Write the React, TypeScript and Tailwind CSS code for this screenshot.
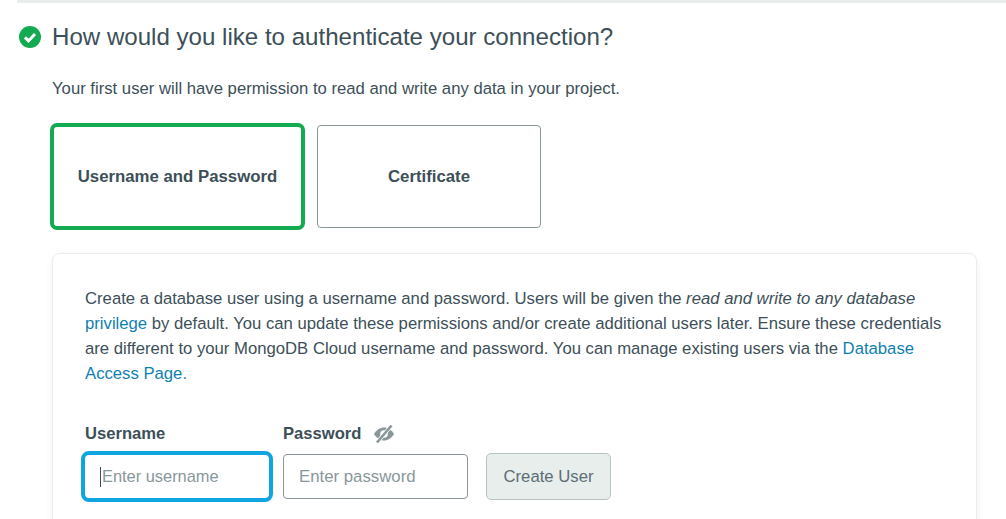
export default function App() {
  return (
    <div className="w-[1006px] h-[519px] overflow-hidden bg-white text-[#3d4f58] font-['Liberation_Sans',sans-serif]">
      <div className="ml-[17px] h-[3px] bg-[#e7eeec]" />
      <div className="flex items-center ml-[19px] mt-[21px] h-[26px]">
        <svg width="22" height="22" viewBox="0 0 22 22" className="shrink-0">
          <circle cx="11" cy="11" r="11" fill="#13aa52" />
          <path d="M6 11.400l3.500 3.500 6.500-7" fill="none" stroke="#fff" strokeWidth="3" />
        </svg>
        <h2 className="ml-[11px] text-[24.1px] leading-[26px] font-normal whitespace-nowrap">How would you like to authenticate your connection?</h2>
      </div>
      <div className="ml-[52px]">
        <p className="mt-[27px] text-[16.7px] leading-[24px] whitespace-nowrap">Your first user will have permission to read and write any data in your project.</p>
        <div className="flex items-center gap-[12px] mt-[22px]">
          <div className="w-[255px] h-[107px] box-border border-4 border-[#13aa52] rounded-[7px] ml-[-2px] pt-[1px] flex items-center justify-center text-[16.8px] font-bold">Username and Password</div>
          <div className="w-[224px] h-[103px] box-border border border-[#89979b] rounded-[4px] pt-[1px] flex items-center justify-center text-[16.8px] font-bold">Certificate</div>
        </div>
        <div className="mt-[23px] w-[925px] h-[400px] box-border border border-[#e7eeec] rounded-[8px] shadow-[0_3px_8px_rgba(6,22,33,0.06)] pl-[32px] pr-[30px] pt-[32px]">
          <p className="text-[16.7px] leading-[25px]">
            Create a database user using a username and password. Users will be given the <em>read and write to any database</em>{" "}
            <span className="text-[#0f7fb0]">privilege</span> by default. You can update these permissions and/or create additional users later. Ensure these credentials are different to your MongoDB Cloud username and password. You can manage existing users via the{" "}
            <span className="text-[#0f7fb0]">Database Access Page.</span>
          </p>
          <div className="flex mt-[36px] h-[24px] items-center text-[16.6px] font-bold">
            <span className="w-[198px]">Username</span>
            <span>Password</span>
            <svg width="22" height="20" viewBox="0 0 22 20" className="ml-[12px]">
              <path d="M1 10c2.500-4 6-6.500 10-6.500S18.500 6 21 10c-2.500 4-6 6.500-10 6.500S3.500 14 1 10z" fill="#89979b" />
              <circle cx="11" cy="10" r="3.800" fill="#fff" />
              <path d="M4 18.500L18.500 1.500" stroke="#fff" strokeWidth="4" />
              <path d="M4 18.500L18.500 1.500" stroke="#89979b" strokeWidth="2.600" />
            </svg>
          </div>
          <div className="flex items-center mt-[5px] ml-[-4px] h-[51px]">
            <div className="relative w-[192px] h-[51px] box-border border-4 border-[#0ea5e0] rounded-[8px] flex items-center pl-[17px] text-[16.4px] text-[#89979b]">
              Enter username
              <span className="absolute left-[15px] top-[12px] w-px h-[20px] bg-[#3d4f58]" />
            </div>
            <div className="ml-[10px] w-[185px] h-[45px] box-border border border-[#89979b] rounded-[4px] flex items-center pl-[15px] text-[16.8px] text-[#89979b]">Enter password</div>
            <div className="ml-[18px] w-[125px] h-[47px] box-border border border-[#b8c4c2] rounded-[5px] bg-[#e7eeec] pt-[1px] flex items-center justify-center text-[16.7px] text-[#5d6c74]">Create User</div>
          </div>
        </div>
      </div>
    </div>
  );
}
